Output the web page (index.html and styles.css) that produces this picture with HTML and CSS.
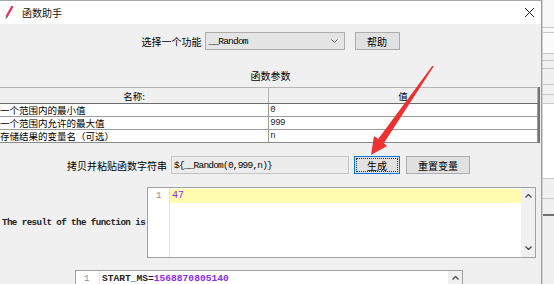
FILE: index.html
```html
<!DOCTYPE html>
<html lang="zh">
<head>
<meta charset="UTF-8">
<title>函数助手</title>
<link rel="stylesheet" href="styles.css">
</head>
<body>
<div class="screen">
    <div class="under-title"><span>NT 函数</span></div>
    <div class="main">
        <div class="dialog">
            <div class="titlebar">
                <svg class="app-icon" width="10" height="14" viewBox="0 0 10 14">
                    <line x1="8" y1="1" x2="3" y2="10" stroke="#e23a5a" stroke-width="2.4" stroke-linecap="round"/>
                    <line x1="3" y1="10" x2="2" y2="12.5" stroke="#7a6a6a" stroke-width="1.4"/>
                </svg>
                <span class="title">函数助手</span>
                <svg class="close" width="11" height="11" viewBox="0 0 11 11">
                    <path d="M1 1 L10 10 M10 1 L1 10" stroke="#222" stroke-width="1"/>
                </svg>
            </div>
            <div class="content">
                <div class="picker">
                    <label>选择一个功能</label>
                    <div class="combo">
                        <span class="mono">__Random</span>
                        <svg width="7" height="4" viewBox="0 0 7 4"><path d="M0.5 0.5 L3.5 3.5 L6.5 0.5" fill="none" stroke="#555" stroke-width="1"/></svg>
                    </div>
                    <button class="btn help">帮助</button>
                </div>
                <div class="section-title">函数参数</div>
                <div class="params">
                    <table>
                        <thead>
                            <tr><th>名称:</th><th>值</th></tr>
                        </thead>
                        <tbody>
                            <tr><td>一个范围内的最小值</td><td class="val">0</td></tr>
                            <tr><td>一个范围内允许的最大值</td><td class="val">999</td></tr>
                            <tr><td>存储结果的变量名（可选）</td><td class="val">n</td></tr>
                        </tbody>
                    </table>
                </div>
                <div class="generate">
                    <label>拷贝并粘贴函数字符串</label>
                    <div class="field"><span class="mono">${__Random(0,999,n)}</span></div>
                    <button class="btn make"><span>生成</span></button>
                    <button class="btn reset">重置变量</button>
                </div>
                <div class="result">
                    <div class="result-label">The result of the function is</div>
                    <div class="editor">
                        <div class="gutter"><div class="line-no">1</div></div>
                        <div class="code"><div class="line current"><span class="num">47</span></div></div>
                        <div class="scrollbar">
                            <svg width="7" height="4" viewBox="0 0 7 4"><path d="M0.5 3.5 L3.5 0.5 L6.5 3.5" fill="none" stroke="#444" stroke-width="1.2"/></svg>
                            <svg width="7" height="4" viewBox="0 0 7 4"><path d="M0.5 0.5 L3.5 3.5 L6.5 0.5" fill="none" stroke="#444" stroke-width="1.2"/></svg>
                        </div>
                    </div>
                </div>
                <div class="vars">
                    <div class="gutter"><div class="line-no">1</div></div>
                    <div class="code"><div class="line">START_MS=<span class="num">1568870805140</span></div></div>
                    <div class="scrollbar">
                        <svg width="7" height="4" viewBox="0 0 7 4"><path d="M0.5 3.5 L3.5 0.5 L6.5 3.5" fill="none" stroke="#444" stroke-width="1.2"/></svg>
                    </div>
                </div>
            </div>
        </div>
        <div class="behind">
            <div class="strip s1"></div>
            <div class="strip s2"></div>
            <div class="strip s3"></div>
            <div class="strip s4"></div>
            <div class="strip s5"></div>
            <div class="strip s6"></div>
            <div class="strip s7"></div>
            <div class="strip s8"></div>
            <div class="strip s9"></div>
            <div class="strip s10"></div>
            <div class="strip s11"></div>
        </div>
    </div>
    <!-- red annotation arrow drawn over the dialog -->
    <svg class="arrow" width="554" height="284" viewBox="0 0 554 284">
        <polygon points="371,155 387,146 383.8,143.2 433.6,66.4 432.4,65.8 378.2,139 374,136" fill="#ee3030"/>
    </svg>
</div>
</body>
</html>
```

FILE: styles.css
```css
body {
    margin: 0;
    padding: 0;
    font-family: "Noto Sans CJK SC", "Noto Sans", sans-serif;
    font-size: 10px;
    color: #000;
    background-color: #fff;
}
.screen {
    position: relative;
    width: 554px;
    height: 284px;
    overflow: hidden;
    display: flex;
    flex-direction: column;
}
.under-title {
    height: 3px;
    overflow: hidden;
    background-color: #fff;
    padding-left: 2px;
}
.under-title span {
    display: block;
    margin-top: -8px;
    font-size: 10px;
    line-height: 12px;
    color: #333;
}
.main {
    flex: 1;
    display: flex;
}
.dialog {
    width: 541px;
    border-top: 1px solid #a8a8a8;
    border-right: 1px solid #9a9a9a;
    background-color: #f0f0f0;
    display: flex;
    flex-direction: column;
}
.titlebar {
    height: 23px;
    background-color: #fff;
    display: flex;
    align-items: center;
    padding-left: 4px;
}
.app-icon {
    margin-top: 1px;
}
.title {
    margin-left: 8px;
    font-size: 10px;
    color: #111;
}
.close {
    margin-left: auto;
    margin-right: 6px;
}
.content {
    padding-top: 8px;
}
.mono {
    font-family: "Liberation Mono", monospace;
    font-size: 9.5px;
    letter-spacing: -0.8px;
}
label {
    white-space: nowrap;
    flex-shrink: 0;
}
.picker {
    height: 18px;
    display: flex;
    align-items: center;
    justify-content: center;
}
.picker label {
    width: 60px;
}
.combo {
    width: 140px;
    height: 18px;
    margin-left: 3px;
    border: 1px solid #acacac;
    background-color: #e5e5e5;
    display: flex;
    align-items: center;
    padding-left: 3px;
    padding-right: 6px;
    justify-content: space-between;
    box-sizing: border-box;
}
.btn {
    height: 18px;
    border: 1px solid #adadad;
    background-color: #e1e1e1;
    font-family: "Noto Sans CJK SC", sans-serif;
    font-size: 10px;
    color: #000;
    padding: 0;
    box-sizing: border-box;
    flex-shrink: 0;
}
.help {
    width: 45px;
    margin-left: 10px;
}
.section-title {
    margin-top: 20px;
    height: 12px;
    line-height: 12px;
    text-align: center;
}
.params {
    margin-top: 5px;
    width: 538px;
    border-right: 2px solid #727272;
    background-color: #fff;
}
.params table {
    width: 538px;
    border-collapse: collapse;
    table-layout: fixed;
    font-size: 9.5px;
}
.params th {
    height: 15px;
    padding: 0;
    font-weight: normal;
    background-color: #f0f0f0;
    border-top: 1px solid #b4b4b4;
    border-bottom: 1px solid #6c6c6c;
    border-right: 1px solid #b4b4b4;
    line-height: 14px;
}
.params td {
    height: 12px;
    padding: 0;
    line-height: 12px;
    border-bottom: 1px solid #9c9c9c;
    border-right: 1px solid #9c9c9c;
    white-space: nowrap;
    overflow: hidden;
}
.params tbody tr:last-child td {
    border-bottom: 1px solid #8a8a8a;
}
.params td.val {
    padding-left: 1px;
    font-family: "Liberation Mono", monospace;
    font-size: 9px;
    letter-spacing: -0.5px;
    color: #223;
}
.generate {
    margin-top: 13px;
    height: 18px;
    display: flex;
    align-items: center;
    padding-left: 67px;
}
.generate label {
    width: 100px;
}
.field {
    width: 178px;
    height: 18px;
    margin-left: 4px;
    border: 1px solid #c4c4c4;
    background-color: #ececec;
    box-sizing: border-box;
    display: flex;
    align-items: center;
    padding-left: 2px;
    flex-shrink: 0;
}
.make {
    width: 46px;
    margin-left: 5px;
    border-color: #0078d7;
    padding: 1px;
}
.make span {
    display: flex;
    align-items: center;
    justify-content: center;
    height: 100%;
    border: 1px dotted #333;
    box-sizing: border-box;
}
.reset {
    width: 64px;
    margin-left: 6px;
}
.result {
    margin-top: 13px;
    height: 71px;
    display: flex;
    align-items: center;
}
.result-label {
    width: 147px;
    padding-left: 2px;
    box-sizing: border-box;
    font-family: "Liberation Mono", monospace;
    font-size: 9.2px;
    letter-spacing: -0.58px;
    font-weight: bold;
    color: #222;
    white-space: nowrap;
}
.editor {
    width: 389px;
    height: 71px;
    border: 1px solid #a0a0a0;
    box-sizing: border-box;
    background-color: #fff;
    display: flex;
}
.gutter {
    width: 22px;
    border-right: 1px solid #e2e2e2;
    color: #888;
    font-family: "Liberation Mono", monospace;
    font-size: 9px;
    box-sizing: border-box;
}
.line-no {
    height: 14px;
    line-height: 14px;
    padding-left: 8px;
    margin-top: 1px;
}
.code {
    flex: 1;
    font-family: "Liberation Mono", monospace;
    font-size: 10px;
}
.line {
    height: 14px;
    line-height: 14px;
    margin-top: 1px;
    padding-left: 2px;
}
.line.current {
    background-color: #fffcb0;
}
.num {
    color: #8a2be2;
}
.scrollbar {
    width: 14px;
    background-color: #f0f0f0;
    display: flex;
    flex-direction: column;
    align-items: center;
    justify-content: space-between;
    padding: 6px 0 7px;
    box-sizing: border-box;
}
.vars {
    margin-top: 12px;
    margin-left: 75px;
    width: 388px;
    height: 30px;
    border: 1px solid #a0a0a0;
    box-sizing: border-box;
    background-color: #fff;
    display: flex;
}
.vars .gutter {
    width: 24px;
}
.vars .line {
    font-weight: bold;
    color: #222;
    font-size: 9.6px;
}
.vars .scrollbar {
    justify-content: flex-start;
    padding-top: 5px;
}
.behind {
    flex: 1;
    border-left: 1px solid #d4d4d4;
    background-color: #f0f0f0;
}
.strip {
    border-bottom: 1px solid #c8c8c8;
}
.s1 { height: 27px; background-color: #f8f8f8; }
.s2 { height: 4px; background-color: #f8f8f8; }
.s3 { height: 20px; background-color: #fbfbfb; }
.s4 { height: 6px; }
.s5 { height: 7px; }
.s6 { height: 15px; }
.s7 { height: 9px; }
.s8 { height: 8px; }
.s9 { height: 74px; background-color: #fff; }
.s10 { height: 19px; }
.s11 { height: 15px; border-bottom: 2px solid #707070; }
.arrow {
    position: absolute;
    left: 0;
    top: 0;
    pointer-events: none;
}
```
